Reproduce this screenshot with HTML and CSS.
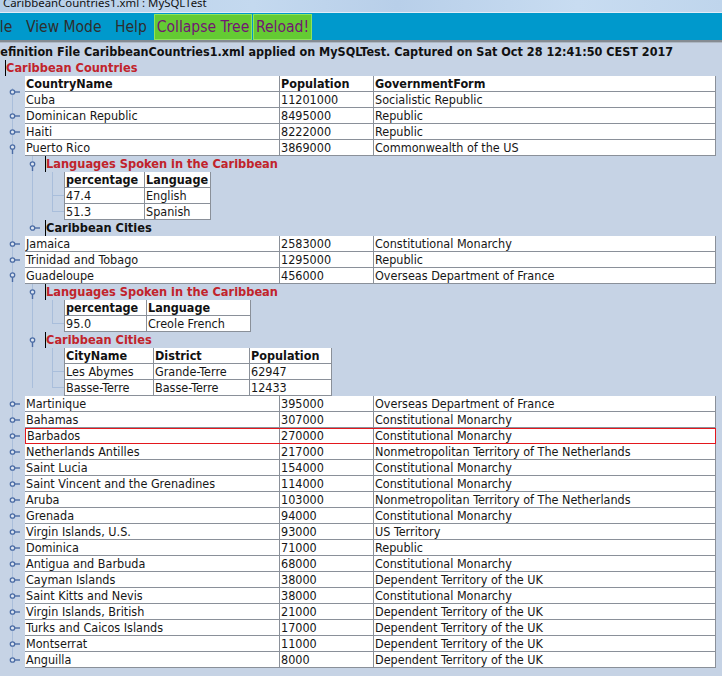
FILE: index.html
```html
<!DOCTYPE html>
<html>
<head>
<meta charset="utf-8">
<title>CaribbeanCountries1.xml : MySQLTest</title>
<link rel="stylesheet" href="styles.css">
</head>
<body>
<div class="titlebar"><span class="t">CaribbeanCountries1.xml : MySQLTest</span></div>
<div class="menubar">
  <span class="mi mi-file">File</span>
  <span class="mi mi-view">View Mode</span>
  <span class="mi mi-help">Help</span>
  <span class="btn btn-collapse">Collapse Tree</span>
  <span class="btn btn-reload">Reload!</span>
</div>
<div class="content">
  <div class="caption">Definition File CaribbeanCountries1.xml applied on MySQLTest. Captured on Sat Oct 28 12:41:50 CEST 2017</div>
  <div class="root-label"><span class="lab red">Caribbean Countries</span></div>
  <div class="tree">
    <div class="rec">
      <span class="tw"><svg width="25" height="16" viewBox="0 0 25 16"><circle cx="12.5" cy="8" r="2.2"/><line x1="14.7" y1="8" x2="20" y2="8"/></svg></span>
      <div class="tbl">
        <div class="cells hdr"><span class="c1">CountryName</span><span class="c2">Population</span><span class="c3">GovernmentForm</span></div>
        <div class="cells"><span class="c1">Cuba</span><span class="c2">11201000</span><span class="c3">Socialistic Republic</span></div>
      </div>
    </div>
    <div class="rec"><span class="tw"><svg width="25" height="16" viewBox="0 0 25 16"><circle cx="12.5" cy="8" r="2.2"/><line x1="14.7" y1="8" x2="20" y2="8"/></svg></span><div class="cells"><span class="c1">Dominican Republic</span><span class="c2">8495000</span><span class="c3">Republic</span></div></div>
    <div class="rec"><span class="tw"><svg width="25" height="16" viewBox="0 0 25 16"><circle cx="12.5" cy="8" r="2.2"/><line x1="14.7" y1="8" x2="20" y2="8"/></svg></span><div class="cells"><span class="c1">Haiti</span><span class="c2">8222000</span><span class="c3">Republic</span></div></div>
    <div class="rec"><span class="tw"><svg width="25" height="16" viewBox="0 0 25 16"><circle cx="12.5" cy="7" r="2.2"/><line x1="12.5" y1="9.2" x2="12.5" y2="14"/></svg></span><div class="cells"><span class="c1">Puerto Rico</span><span class="c2">3869000</span><span class="c3">Commonwealth of the US</span></div></div>
    <div class="children">
      <div class="lrow"><span class="tw2"><svg width="20" height="16" viewBox="0 0 20 16"><circle cx="7.5" cy="8" r="2.2"/><line x1="7.5" y1="10.2" x2="7.5" y2="15"/></svg></span><span class="lab red">Languages Spoken in the Caribbean</span></div>
      <div class="sgroup">
        <div class="srow shdr"><span class="sc" style="width:81px">percentage</span><span class="sc" style="width:66px">Language</span></div>
        <div class="srow"><span class="sc" style="width:81px">47.4</span><span class="sc" style="width:66px">English</span></div>
        <div class="srow"><span class="sc" style="width:81px">51.3</span><span class="sc" style="width:66px">Spanish</span></div>
      </div>
      <div class="lrow"><span class="tw2"><svg width="20" height="16" viewBox="0 0 20 16"><circle cx="7.5" cy="8" r="2.2"/><line x1="9.7" y1="8" x2="15" y2="8"/></svg></span><span class="lab">Caribbean Cities</span></div>
    </div>
    <div class="rec"><span class="tw"><svg width="25" height="16" viewBox="0 0 25 16"><circle cx="12.5" cy="8" r="2.2"/><line x1="14.7" y1="8" x2="20" y2="8"/></svg></span><div class="cells"><span class="c1">Jamaica</span><span class="c2">2583000</span><span class="c3">Constitutional Monarchy</span></div></div>
    <div class="rec"><span class="tw"><svg width="25" height="16" viewBox="0 0 25 16"><circle cx="12.5" cy="8" r="2.2"/><line x1="14.7" y1="8" x2="20" y2="8"/></svg></span><div class="cells"><span class="c1">Trinidad and Tobago</span><span class="c2">1295000</span><span class="c3">Republic</span></div></div>
    <div class="rec"><span class="tw"><svg width="25" height="16" viewBox="0 0 25 16"><circle cx="12.5" cy="7" r="2.2"/><line x1="12.5" y1="9.2" x2="12.5" y2="14"/></svg></span><div class="cells"><span class="c1">Guadeloupe</span><span class="c2">456000</span><span class="c3">Overseas Department of France</span></div></div>
    <div class="children">
      <div class="lrow"><span class="tw2"><svg width="20" height="16" viewBox="0 0 20 16"><circle cx="7.5" cy="8" r="2.2"/><line x1="7.5" y1="10.2" x2="7.5" y2="15"/></svg></span><span class="lab red">Languages Spoken in the Caribbean</span></div>
      <div class="sgroup">
        <div class="srow shdr"><span class="sc" style="width:83px">percentage</span><span class="sc" style="width:104px">Language</span></div>
        <div class="srow"><span class="sc" style="width:83px">95.0</span><span class="sc" style="width:104px">Creole French</span></div>
      </div>
      <div class="lrow"><span class="tw2"><svg width="20" height="16" viewBox="0 0 20 16"><circle cx="7.5" cy="8" r="2.2"/><line x1="7.5" y1="10.2" x2="7.5" y2="15"/></svg></span><span class="lab red">Caribbean Cities</span></div>
      <div class="sgroup">
        <div class="srow shdr"><span class="sc" style="width:90px">CityName</span><span class="sc" style="width:96px">District</span><span class="sc" style="width:82px">Population</span></div>
        <div class="srow"><span class="sc" style="width:90px">Les Abymes</span><span class="sc" style="width:96px">Grande-Terre</span><span class="sc" style="width:82px">62947</span></div>
        <div class="srow"><span class="sc" style="width:90px">Basse-Terre</span><span class="sc" style="width:96px">Basse-Terre</span><span class="sc" style="width:82px">12433</span></div>
      </div>
    </div>
    <div class="rec"><span class="tw"><svg width="25" height="16" viewBox="0 0 25 16"><circle cx="12.5" cy="8" r="2.2"/><line x1="14.7" y1="8" x2="20" y2="8"/></svg></span><div class="cells"><span class="c1">Martinique</span><span class="c2">395000</span><span class="c3">Overseas Department of France</span></div></div>
    <div class="rec"><span class="tw"><svg width="25" height="16" viewBox="0 0 25 16"><circle cx="12.5" cy="8" r="2.2"/><line x1="14.7" y1="8" x2="20" y2="8"/></svg></span><div class="cells"><span class="c1">Bahamas</span><span class="c2">307000</span><span class="c3">Constitutional Monarchy</span></div></div>
    <div class="rec"><span class="tw"><svg width="25" height="16" viewBox="0 0 25 16"><circle cx="12.5" cy="8" r="2.2"/><line x1="14.7" y1="8" x2="20" y2="8"/></svg></span><div class="cells sel"><span class="c1">Barbados</span><span class="c2">270000</span><span class="c3">Constitutional Monarchy</span></div></div>
    <div class="rec"><span class="tw"><svg width="25" height="16" viewBox="0 0 25 16"><circle cx="12.5" cy="8" r="2.2"/><line x1="14.7" y1="8" x2="20" y2="8"/></svg></span><div class="cells"><span class="c1">Netherlands Antilles</span><span class="c2">217000</span><span class="c3">Nonmetropolitan Territory of The Netherlands</span></div></div>
    <div class="rec"><span class="tw"><svg width="25" height="16" viewBox="0 0 25 16"><circle cx="12.5" cy="8" r="2.2"/><line x1="14.7" y1="8" x2="20" y2="8"/></svg></span><div class="cells"><span class="c1">Saint Lucia</span><span class="c2">154000</span><span class="c3">Constitutional Monarchy</span></div></div>
    <div class="rec"><span class="tw"><svg width="25" height="16" viewBox="0 0 25 16"><circle cx="12.5" cy="8" r="2.2"/><line x1="14.7" y1="8" x2="20" y2="8"/></svg></span><div class="cells"><span class="c1">Saint Vincent and the Grenadines</span><span class="c2">114000</span><span class="c3">Constitutional Monarchy</span></div></div>
    <div class="rec"><span class="tw"><svg width="25" height="16" viewBox="0 0 25 16"><circle cx="12.5" cy="8" r="2.2"/><line x1="14.7" y1="8" x2="20" y2="8"/></svg></span><div class="cells"><span class="c1">Aruba</span><span class="c2">103000</span><span class="c3">Nonmetropolitan Territory of The Netherlands</span></div></div>
    <div class="rec"><span class="tw"><svg width="25" height="16" viewBox="0 0 25 16"><circle cx="12.5" cy="8" r="2.2"/><line x1="14.7" y1="8" x2="20" y2="8"/></svg></span><div class="cells"><span class="c1">Grenada</span><span class="c2">94000</span><span class="c3">Constitutional Monarchy</span></div></div>
    <div class="rec"><span class="tw"><svg width="25" height="16" viewBox="0 0 25 16"><circle cx="12.5" cy="8" r="2.2"/><line x1="14.7" y1="8" x2="20" y2="8"/></svg></span><div class="cells"><span class="c1">Virgin Islands, U.S.</span><span class="c2">93000</span><span class="c3">US Territory</span></div></div>
    <div class="rec"><span class="tw"><svg width="25" height="16" viewBox="0 0 25 16"><circle cx="12.5" cy="8" r="2.2"/><line x1="14.7" y1="8" x2="20" y2="8"/></svg></span><div class="cells"><span class="c1">Dominica</span><span class="c2">71000</span><span class="c3">Republic</span></div></div>
    <div class="rec"><span class="tw"><svg width="25" height="16" viewBox="0 0 25 16"><circle cx="12.5" cy="8" r="2.2"/><line x1="14.7" y1="8" x2="20" y2="8"/></svg></span><div class="cells"><span class="c1">Antigua and Barbuda</span><span class="c2">68000</span><span class="c3">Constitutional Monarchy</span></div></div>
    <div class="rec"><span class="tw"><svg width="25" height="16" viewBox="0 0 25 16"><circle cx="12.5" cy="8" r="2.2"/><line x1="14.7" y1="8" x2="20" y2="8"/></svg></span><div class="cells"><span class="c1">Cayman Islands</span><span class="c2">38000</span><span class="c3">Dependent Territory of the UK</span></div></div>
    <div class="rec"><span class="tw"><svg width="25" height="16" viewBox="0 0 25 16"><circle cx="12.5" cy="8" r="2.2"/><line x1="14.7" y1="8" x2="20" y2="8"/></svg></span><div class="cells"><span class="c1">Saint Kitts and Nevis</span><span class="c2">38000</span><span class="c3">Constitutional Monarchy</span></div></div>
    <div class="rec"><span class="tw"><svg width="25" height="16" viewBox="0 0 25 16"><circle cx="12.5" cy="8" r="2.2"/><line x1="14.7" y1="8" x2="20" y2="8"/></svg></span><div class="cells"><span class="c1">Virgin Islands, British</span><span class="c2">21000</span><span class="c3">Dependent Territory of the UK</span></div></div>
    <div class="rec"><span class="tw"><svg width="25" height="16" viewBox="0 0 25 16"><circle cx="12.5" cy="8" r="2.2"/><line x1="14.7" y1="8" x2="20" y2="8"/></svg></span><div class="cells"><span class="c1">Turks and Caicos Islands</span><span class="c2">17000</span><span class="c3">Dependent Territory of the UK</span></div></div>
    <div class="rec"><span class="tw"><svg width="25" height="16" viewBox="0 0 25 16"><circle cx="12.5" cy="8" r="2.2"/><line x1="14.7" y1="8" x2="20" y2="8"/></svg></span><div class="cells"><span class="c1">Montserrat</span><span class="c2">11000</span><span class="c3">Dependent Territory of the UK</span></div></div>
    <div class="rec"><span class="tw"><svg width="25" height="16" viewBox="0 0 25 16"><circle cx="12.5" cy="8" r="2.2"/><line x1="14.7" y1="8" x2="20" y2="8"/></svg></span><div class="cells"><span class="c1">Anguilla</span><span class="c2">8000</span><span class="c3">Dependent Territory of the UK</span></div></div>
  </div>
</div>
</body>
</html>
```
FILE: styles.css
```css
* { box-sizing: border-box; }
html, body { margin: 0; padding: 0; }
body {
  width: 722px;
  height: 676px;
  overflow: hidden;
  background: #c6d3e5;
  font-family: "DejaVu Sans Condensed", "DejaVu Sans", sans-serif;
  font-stretch: condensed;
  color: #161616;
}

/* window title strip (cropped) */
.titlebar {
  height: 13px;
  overflow: hidden;
  background: linear-gradient(90deg, #b6cee8 0%, #c4d9ef 35%, #b8cfe9 55%, #c8dcf1 80%, #bfd5ec 100%);
  border-bottom: 1px solid #e2ecf7;
}
.titlebar .t {
  display: block;
  margin: -4px 0 0 3px;
  font-family: "Noto Sans", "DejaVu Sans", sans-serif;
  font-stretch: normal;
  font-size: 11.4px;
  line-height: 14px;
  color: #111;
  white-space: nowrap;
}

/* menu bar */
.menubar {
  height: 29px;
  display: flex;
  align-items: stretch;
  padding: 1px 0 0 0;
  background: #0099cc;
  border-bottom: 2px solid #858b92;
  box-shadow: 0 1px 0 #aeb8c4;
  font-size: 15.5px;
  white-space: nowrap;
}
.mi {
  display: flex;
  align-items: center;
  color: #2e2e2e;
  height: 25px;
}
.mi-file { width: 37px; margin-left: -11px; }
.mi-view { width: 89px; }
.mi-help { width: 39px; }
.btn {
  display: flex;
  align-items: center;
  justify-content: center;
  height: 26px;
  background: #64cb33;
  border: 1px solid #8fe45c;
  color: #721672;
}
.btn-collapse { width: 98px; }
.btn-reload { width: 59px; margin-left: 1px; }

/* content */
.content { padding-top: 2px; }
.caption {
  height: 16px;
  line-height: 16px;
  margin-left: -9px;
  font-weight: bold;
  font-size: 12.5px;
  white-space: nowrap;
  color: #111;
}
.root-label {
  height: 16px;
  display: flex;
  padding-left: 5px;
}
.lab {
  display: block;
  height: 16px;
  line-height: 16px;
  border-left: 1px solid #000;
  padding-left: 0;
  font-weight: bold;
  font-size: 12.7px;
  white-space: nowrap;
  color: #111;
}
.lab.red { color: #c1232b; }

/* tree */
.tree {
  background: linear-gradient(#a9bedb, #a9bedb) no-repeat 12px 12px / 1px calc(100% - 20px);
}
.rec { display: flex; }
.tw {
  width: 25px;
  flex: none;
  display: flex;
  align-items: center;
}
.tw svg, .tw2 svg { display: block; }
svg circle { fill: #dfe7f2; stroke: #4b6ca5; stroke-width: 1.3; }
svg line { stroke: #4b6ca5; stroke-width: 1.4; }

.tbl { display: flex; flex-direction: column; }
.cells {
  display: flex;
  height: 16px;
  background: #fff;
  border-bottom: 1px solid #8a9099;
  font-size: 12.5px;
  line-height: 15px;
  white-space: nowrap;
}
.cells span {
  display: block;
  overflow: hidden;
  padding-left: 1px;
  border-right: 1px solid #8a9099;
}
.c1 { width: 255px; }
.c2 { width: 94px; }
.c3 { width: 342px; }
.cells.hdr { font-weight: bold; color: #111; }
.cells.sel {
  border: 1px solid #e3171d;
  line-height: 14px;
}
.cells.sel .c1 { width: 254px; }
.cells.sel .c3 { width: 341px; border-right: 0; }

/* expanded children */
.children {
  margin-left: 25px;
  background: linear-gradient(#a9bedb, #a9bedb) no-repeat 7px 0 / 1px calc(100% - 8px);
}
.lrow { display: flex; height: 16px; }
.tw2 { width: 20px; flex: none; }

.sgroup {
  margin-left: 27px;
  padding-left: 12px;
  background: linear-gradient(#a9bedb, #a9bedb) no-repeat 0 0 / 1px calc(100% - 8px);
}
.srow {
  display: flex;
  height: 16px;
  margin-left: -12px;
  padding-left: 12px;
  background: linear-gradient(#a9bedb, #a9bedb) no-repeat 0 7px / 12px 1px;
  font-size: 12.5px;
  line-height: 15px;
  white-space: nowrap;
}
.srow.shdr { background: none; font-weight: bold; color: #111; }
.sc {
  display: block;
  height: 16px;
  background: #fff;
  padding-left: 1px;
  border-right: 1px solid #8a9099;
  border-bottom: 1px solid #8a9099;
  overflow: hidden;
}
.sc:first-child { border-left: 1px solid #8a9099; }
```
